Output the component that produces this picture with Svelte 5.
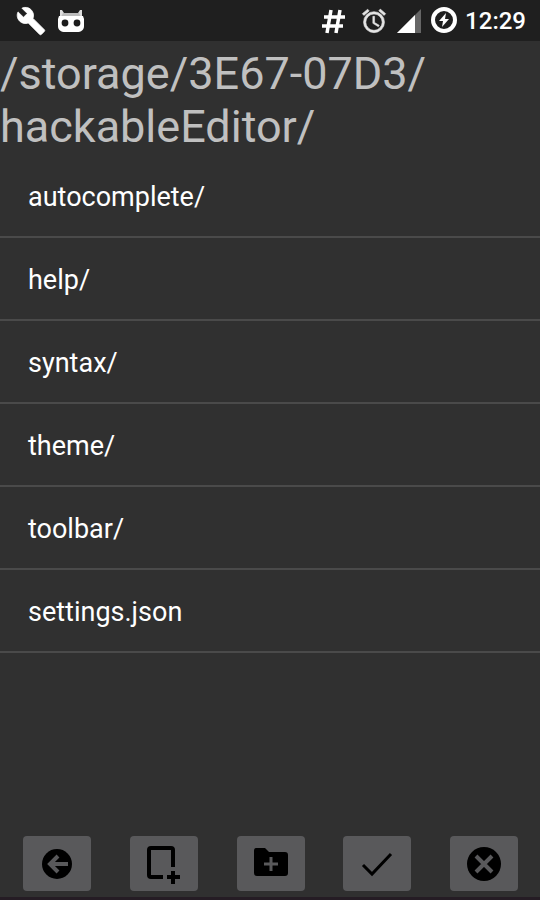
<script lang="ts">
  const folders: string[] = ["/storage/", "3E67-07D3/", "hackableEditor/"];

  const files: string[] = [
    "autocomplete/",
    "help/",
    "syntax/",
    "theme/",
    "toolbar/",
    "settings.json",
  ];
</script>

<div class="screen">
  <header class="status-bar">
    <svg width="30" height="30" viewBox="0 0 24 24" aria-hidden="true">
      <path
        fill="#fff"
        stroke="#fff"
        stroke-width="0.6"
        d="M22.7 19l-9.1-9.1c.9-2.3.4-5-1.5-6.9-2-2-5-2.4-7.4-1.3L9 6 6 9 1.600 4.700C.4 7.100.9 10.100 2.900 12.100c1.900 1.900 4.600 2.400 6.900 1.500l9.100 9.100c.4.4 1 .4 1.400 0l2.300-2.300c.5-.4.5-1.100.1-1.400z"
      />
    </svg>
    <svg class="robot" width="28" height="26" viewBox="0 0 28 26" aria-hidden="true">
      <path fill="#ddd" d="M3 2h2l2 3h14l2-3h2v8H3z" />
      <path fill="#bbb" d="M6 5h16l2 4H4z" />
      <path fill="#fff" d="M2 8h24l1 3v7c0 4-3 6-7 6H8c-4 0-7-2-7-6v-7z" />
      <circle cx="8" cy="15" r="3.400" fill="#1c1c1c" />
      <circle cx="20" cy="15" r="3.400" fill="#1c1c1c" />
    </svg>

    <div class="indicators">
      <svg width="24" height="26" viewBox="0 0 24 26" aria-hidden="true">
        <path
          fill="none"
          stroke="#fff"
          stroke-width="3.500"
          d="M10 2L6 25M19 2l-4 23M3 9h21M1 18h21"
        />
      </svg>
      <svg class="alarm" width="28" height="28" viewBox="0 0 24 24" aria-hidden="true">
        <path
          fill="#e4e4e4"
          stroke="#e4e4e4"
          stroke-width="0.500"
          d="M22 5.700l-4.600-3.900-1.300 1.500 4.600 3.900L22 5.700zM7.900 3.400L6.600 1.900 2 5.700l1.300 1.500 4.600-3.800zM12.500 8H11v6l4.700 2.900.8-1.200-4-2.400V8zM12 4a9 9 0 1 0 0 18 9 9 0 0 0 0-18zm0 16a7 7 0 1 1 0-14 7 7 0 0 1 0 14z"
        />
      </svg>
      <svg class="signal" width="24" height="24" viewBox="0 0 24 24" aria-hidden="true">
        <path fill="#666" d="M24 0v24H0z" />
        <path fill="#fff" d="M18 6v18H0z" />
      </svg>
      <svg class="battery" width="28" height="28" viewBox="0 0 28 28" aria-hidden="true">
        <circle cx="14" cy="14" r="11" fill="none" stroke="#fff" stroke-width="4" />
        <path fill="#fff" d="M16 7l-7 8h4l-1 6 7-8h-4z" />
      </svg>
      <time class="clock">12:29</time>
    </div>
  </header>

  <main>
    <h1 class="path">
      {#each folders as folder}<span>{folder}</span><wbr />{/each}
    </h1>
    <ul class="files">
      {#each files as file}
        <li><button class="file">{file}</button></li>
      {/each}
    </ul>
  </main>

  <footer class="actions">
    <button class="action" aria-label="Back">
      <svg width="36" height="36" viewBox="0 0 36 36">
        <circle cx="18" cy="18" r="15" />
        <path class="cut" d="M19 10l-8 8 8 8M11 18h18" />
      </svg>
    </button>
    <button class="action" aria-label="New file">
      <svg width="36" height="36" viewBox="0 0 36 36">
        <path
          class="line bold"
          d="M17 31H5q-2 0-2-2V4q0-2 2-2h20q2 0 2 2v17M27 25v13M21 31h13"
        />
      </svg>
    </button>
    <button class="action" aria-label="New folder">
      <svg width="36" height="36" viewBox="0 0 36 36">
        <path d="M3 2h9l4 4h16q3 0 3 3v18q0 3-3 3H4q-3 0-3-3V5q0-3 2-3z" />
        <path class="cut thin" d="M18 11v14M11 18h14" />
      </svg>
    </button>
    <button class="action" aria-label="Confirm">
      <svg width="36" height="36" viewBox="0 0 36 36">
        <path class="line" d="M4 19l9 9L32 8" />
      </svg>
    </button>
    <button class="action" aria-label="Cancel">
      <svg width="36" height="36" viewBox="0 0 36 36">
        <circle cx="18" cy="18" r="17" />
        <path class="cut" d="M10 10l16 16M26 10L10 26" />
      </svg>
    </button>
  </footer>
</div>

<style>
  :global(body) {
    margin: 0;
    background: #303030;
  }

  .screen {
    display: flex;
    flex-direction: column;
    box-sizing: border-box;
    min-height: 100vh;
    background: #303030;
    border-bottom: 3px solid #251c24;
    font-family: Roboto, sans-serif;
  }

  .status-bar {
    display: flex;
    align-items: center;
    height: 41px;
    padding: 0 14px 0 16px;
    background: #1f1f1f;
  }

  .robot {
    margin-left: 11px;
  }

  .indicators {
    display: flex;
    align-items: center;
    margin-left: auto;
  }

  .alarm {
    margin-left: 15px;
  }

  .signal {
    margin-left: 9px;
  }

  .battery {
    margin: 0 7px 2px 9px;
  }

  .clock {
    color: #fff;
    font-size: 24px;
    font-weight: 500;
    line-height: 28px;
  }

  main {
    flex: 1;
  }

  .path {
    margin: 0;
    padding: 6px 0 2px;
    color: #c0c0c0;
    font-size: 45px;
    font-weight: 400;
    line-height: 53px;
  }

  .path span {
    white-space: nowrap;
  }

  .files {
    margin: 0;
    padding: 0;
    list-style: none;
  }

  .file {
    display: block;
    box-sizing: border-box;
    width: 100%;
    padding: 27px 28px 24px;
    border: 0;
    border-bottom: 2px solid #4a4a4a;
    background: none;
    color: #fff;
    font-family: inherit;
    font-size: 27px;
    line-height: 30px;
    text-align: left;
  }

  .actions {
    display: flex;
    justify-content: space-between;
    padding: 0 22px 6px 23px;
  }

  .action {
    display: flex;
    align-items: center;
    justify-content: center;
    width: 68px;
    height: 55px;
    padding: 0;
    border: 0;
    border-radius: 4px;
    background: #59595b;
  }

  .action svg {
    overflow: visible;
  }

  .line {
    fill: none;
    stroke: #000;
    stroke-width: 3;
  }

  .cut {
    fill: none;
    stroke: #59595b;
    stroke-width: 4;
  }

  .thin {
    stroke-width: 3;
  }

  .bold {
    stroke-width: 4;
  }
</style>
